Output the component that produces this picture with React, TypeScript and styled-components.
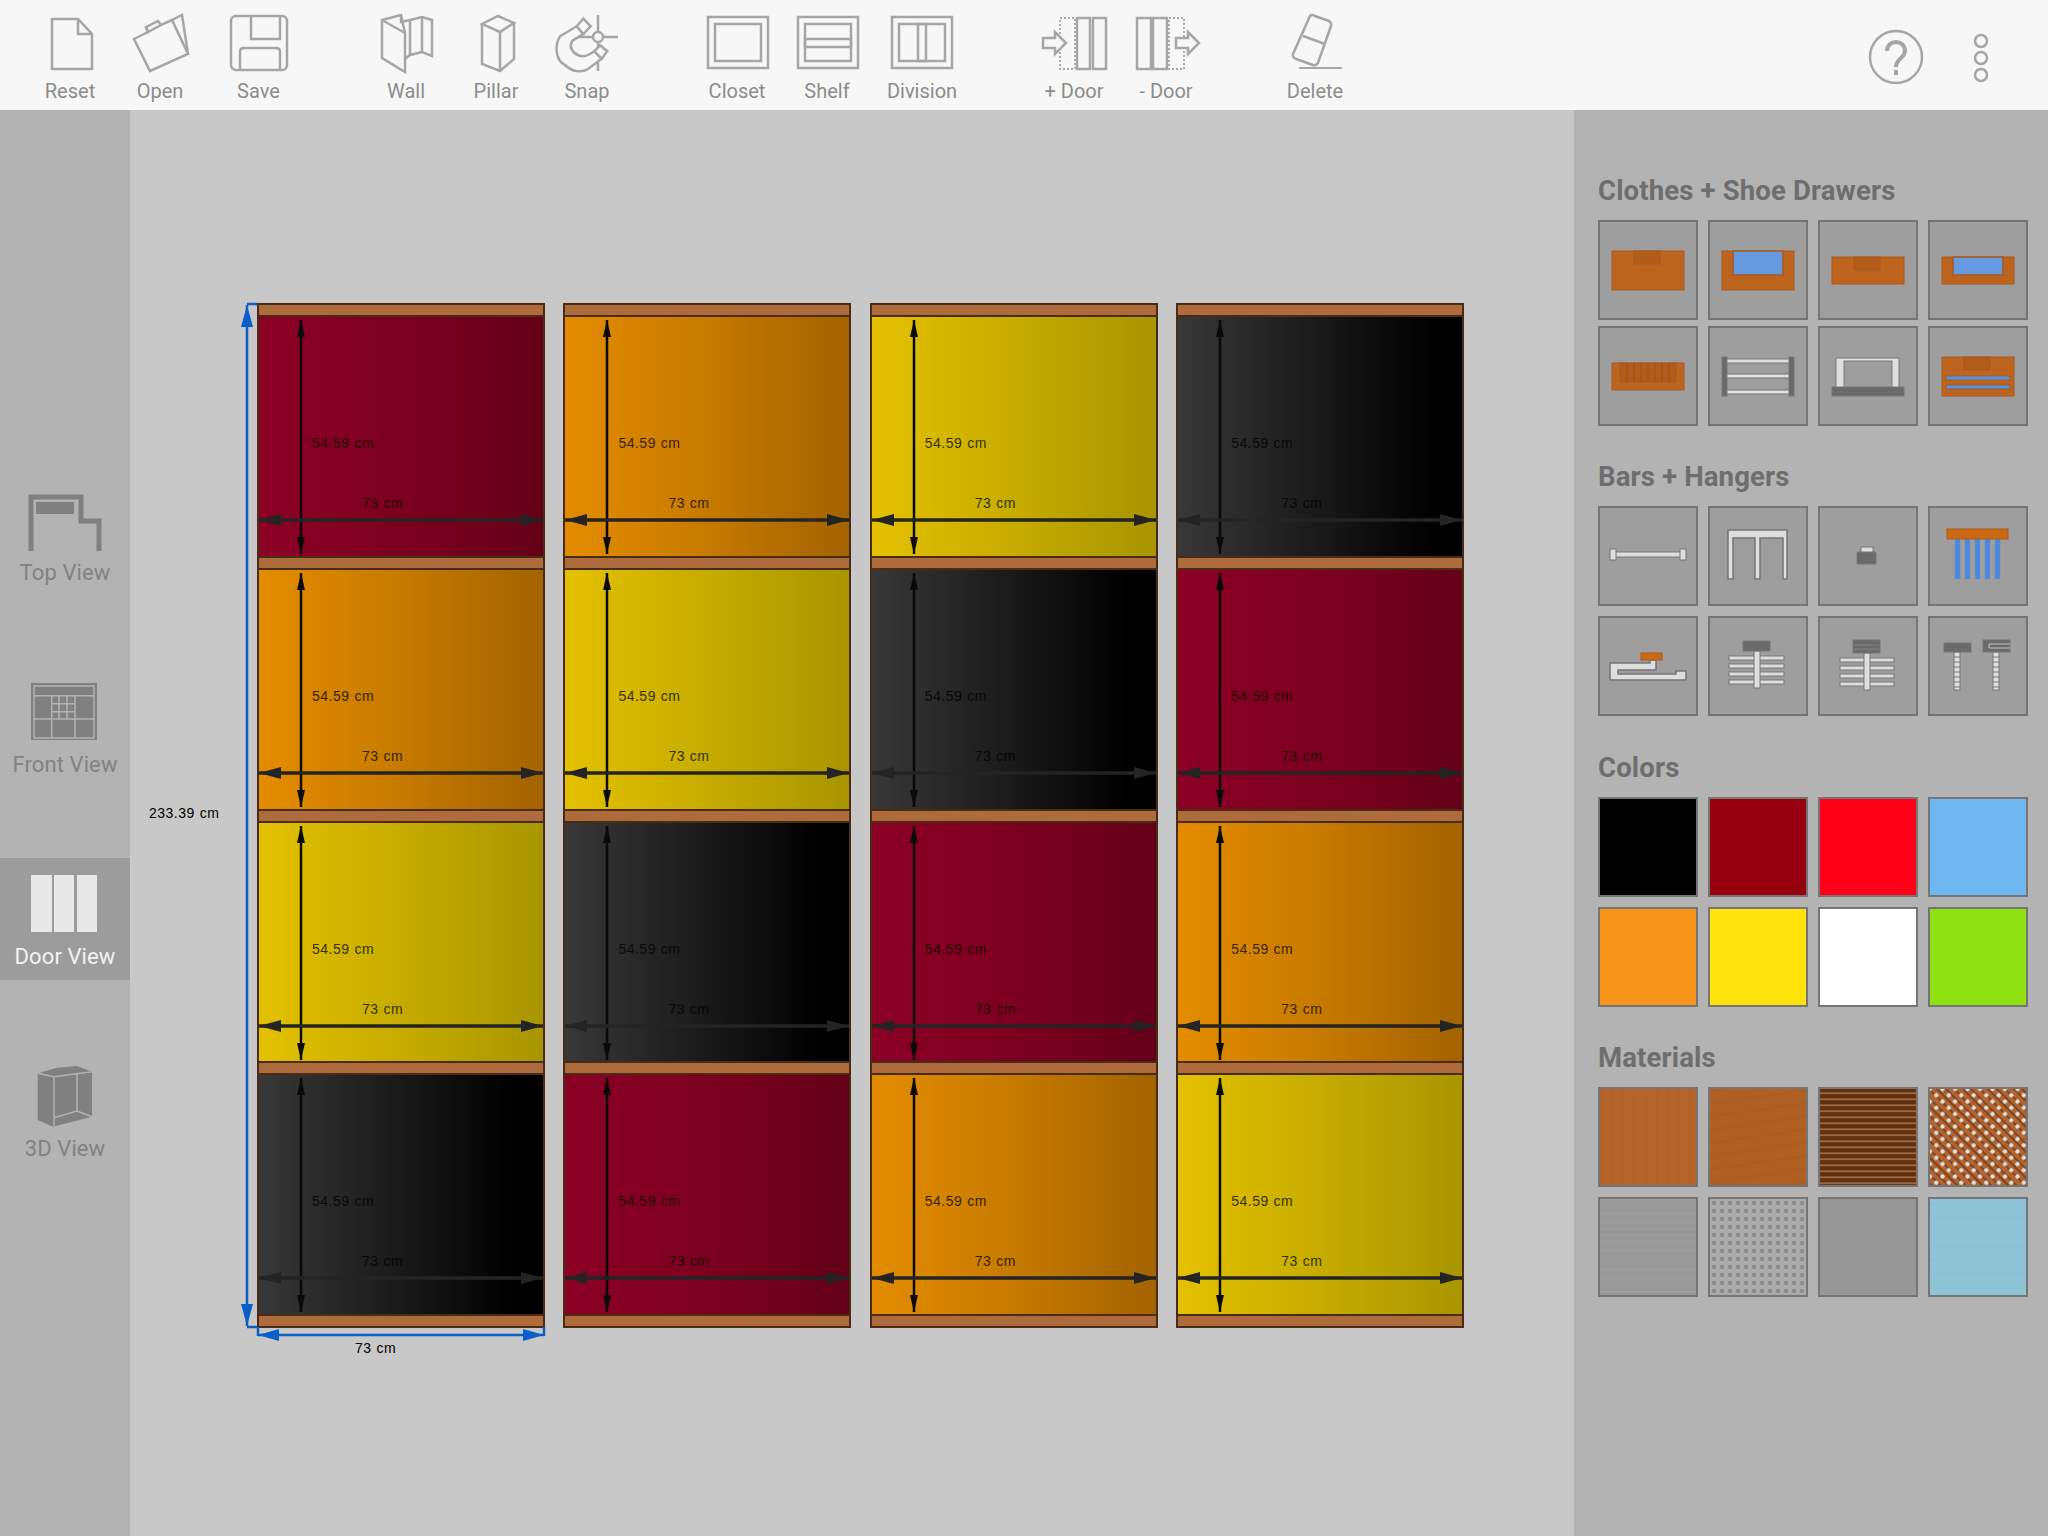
import React from "react";
import styled, { createGlobalStyle } from "styled-components";

const GlobalStyle = createGlobalStyle`
  html, body { margin: 0; padding: 0; }
  body { font-family: Roboto, "Liberation Sans", sans-serif; background: #c8c8c8; }
`;

const Page = styled.div`
  width: 2048px;
  height: 1536px;
  display: flex;
  flex-direction: column;
  overflow: hidden;
`;

const Toolbar = styled.header`
  height: 110px;
  flex: none;
  background: #f7f7f7;
  display: flex;
  padding-left: 25px;
  box-sizing: border-box;
`;

const ToolItem = styled.div<{ $w?: number; $ml?: number }>`
  width: ${({ $w }) => $w ?? 90}px;
  margin-left: ${({ $ml }) => $ml ?? 0}px;
  padding-top: 14px;
  display: flex;
  flex-direction: column;
  align-items: center;
  box-sizing: border-box;
`;

const ToolLabel = styled.span`
  font-size: 20px;
  line-height: 24px;
  margin-top: 5px;
  color: #8c8c8c;
  white-space: nowrap;
`;

const ToolSvg = styled.svg.attrs({ viewBox: "0 0 64 60", width: 64, height: 60 })`
  fill: none;
  stroke: #a6a6a6;
  stroke-width: 2.5;
  overflow: visible;
`;

const HelpButton = styled.svg.attrs({ viewBox: "0 0 56 56", width: 56, height: 56 })`
  margin: 29px 0 0 508px;
  fill: none;
  stroke: #a6a6a6;
  stroke-width: 2.5;
`;

const MoreButton = styled.svg.attrs({ viewBox: "0 0 18 52", width: 18, height: 52 })`
  margin: 32px 0 0 48px;
  fill: none;
  stroke: #a6a6a6;
  stroke-width: 2.5;
`;

const Body = styled.div`
  flex: 1;
  display: flex;
  min-height: 0;
`;

const ViewRail = styled.nav`
  width: 130px;
  flex: none;
  background: #b3b3b3;
  display: flex;
  flex-direction: column;
  justify-content: center;
  gap: 70px;
`;

const ViewItem = styled.div<{ $active?: boolean }>`
  height: 122px;
  padding-top: 17px;
  box-sizing: border-box;
  display: flex;
  flex-direction: column;
  align-items: center;
  background: ${({ $active }) => ($active ? "#9c9c9c" : "transparent")};
  color: ${({ $active }) => ($active ? "#f2f2f2" : "#828282")};
`;

const ViewLabel = styled.span`
  font-size: 22px;
  line-height: 26px;
  margin-top: 9px;
  letter-spacing: 0.1px;
  white-space: nowrap;
`;

const ViewSvg = styled.svg.attrs({ viewBox: "0 0 76 60", width: 76, height: 60 })`
  overflow: visible;
`;

const Canvas = styled.main`
  flex: 1;
  background: #c8c8c8;
  padding: 193px 0 0 127px;
  box-sizing: border-box;
`;

const Stage = styled.div`
  position: relative;
  display: flex;
  gap: 18.4px;
  width: fit-content;
`;

const DoorColumn = styled.div`
  width: 288px;
  box-sizing: border-box;
  border: solid #4a2c16;
  border-width: 0 2px;
  display: flex;
  flex-direction: column;
`;

const Shelf = styled.div`
  height: 14px;
  box-sizing: border-box;
  background: #ae6b3b;
  border-top: 2px solid #4a2c16;
  border-bottom: 2px solid #4a2c16;
`;

const gradients = {
  red: "linear-gradient(90deg, #8d0026, #7c0020 50%, #640018)",
  orange: "linear-gradient(90deg, #e48c00, #c97c00 45%, #a36300)",
  yellow: "linear-gradient(90deg, #e4c100, #c9ae00 45%, #a89500)",
  black: "linear-gradient(90deg, #383838, #000 90%)",
};

type DoorColor = keyof typeof gradients;

const Door = styled.div<{ $color: DoorColor }>`
  position: relative;
  height: 238.75px;
  background: ${({ $color }) => gradients[$color]};
`;

const ArrowLayer = styled.svg`
  position: absolute;
  left: 0;
  top: 0;
  width: 100%;
  height: 100%;
  overflow: visible;
`;

const Measure = styled.span<{ $x: number; $y: number; $faded?: boolean }>`
  position: absolute;
  left: ${({ $x }) => $x}px;
  top: ${({ $y }) => $y}px;
  transform: translateY(-50%);
  font-family: "Liberation Sans", Arial, sans-serif;
  font-size: 14px;
  letter-spacing: 0.5px;
  word-spacing: 0.5px;
  color: #000;
  opacity: ${({ $faded }) => ($faded ? 0.75 : 1)};
  white-space: nowrap;
`;

const SidePanel = styled.aside`
  width: 474px;
  flex: none;
  background: #b3b3b3;
  box-sizing: border-box;
  padding: 66px 0 0 24px;
  display: flex;
  flex-direction: column;
  gap: 36.3px;
`;

const Section = styled.section`
  display: flex;
  flex-direction: column;
  gap: 14px;
`;

const SectionTitle = styled.h2`
  margin: 0;
  font-size: 27.5px;
  line-height: 30px;
  font-weight: 700;
  letter-spacing: 0.15px;
  color: #6e6e6e;
`;

const TileGrid = styled.div<{ $rowGap?: number }>`
  display: grid;
  grid-template-columns: repeat(4, 100px);
  grid-auto-rows: 100px;
  column-gap: 10px;
  row-gap: ${({ $rowGap }) => $rowGap ?? 10}px;
`;

const Tile = styled.div`
  box-sizing: border-box;
  border: 2px solid #757575;
  background: #9e9e9e;
`;

const Swatch = styled.div<{ $fill: string }>`
  box-sizing: border-box;
  border: 2px solid #757575;
  background: ${({ $fill }) => $fill};
`;

const TileSvg = styled.svg.attrs({ viewBox: "2 2 96 96" })`
  display: block;
  width: 100%;
  height: 100%;
`;

const wood = "#bd641f";
const woodEdge = "#a8591f";
const woodDark = "#b35d1c";
const blue = "#6699dd";
const light = "#dedede";
const grey = "#6a6a6a";
const edge = "#767676";

const Drawer = ({ y, h, pocket, handle = 13 }: { y: number; h: number; pocket?: number; handle?: number }) => (
  <>
    <rect x="14" y={y} width="72" height={h} fill={wood} stroke={woodEdge} />
    {pocket ? (
      <rect x="25" y={y} width="50" height={pocket} fill={blue} stroke={woodEdge} strokeWidth="1.5" />
    ) : (
      <rect x="36" y={y} width="26" height={handle} fill={woodDark} stroke={woodEdge} />
    )}
  </>
);

const Rails = ({ x, w, ys, h = 4 }: { x: number; w: number; ys: number[]; h?: number }) => (
  <>
    {ys.map((y) => (
      <rect key={y} x={x} y={y} width={w} height={h} fill={light} stroke={edge} />
    ))}
  </>
);

const drawerIcons: React.ReactNode[] = [
  <Drawer y={31} h={39} />,
  <Drawer y={31} h={39} pocket={24} />,
  <Drawer y={37} h={27} />,
  <Drawer y={37} h={27} pocket={18} />,
  <>
    <rect x="14" y="37" width="72" height="27" fill={wood} stroke={woodEdge} />
    <rect x="22" y="37" width="56" height="19" fill={woodDark} stroke={woodEdge} />
    {[29, 36, 43, 50, 57, 64, 71].map((x) => (
      <line key={x} x1={x} x2={x} y1="37" y2="56" stroke="#99521c" />
    ))}
  </>,
  <>
    <Rails x={18} w={64} ys={[33, 48, 64]} />
    <rect x="14" y="31" width="5" height="39" fill={grey} stroke={edge} />
    <rect x="81" y="31" width="5" height="39" fill={grey} stroke={edge} />
  </>,
  <>
    <rect x="18" y="32" width="63" height="30" fill={light} stroke={edge} />
    <rect x="26" y="35" width="48" height="27" fill="#9e9e9e" stroke={edge} />
    <rect x="14" y="61" width="72" height="9" fill={grey} stroke={edge} />
  </>,
  <>
    <Drawer y={31} h={39} />
    <rect x="18" y="50" width="64" height="4" fill="#4f94e8" stroke={woodEdge} />
    <rect x="18" y="59" width="64" height="4" fill="#4f94e8" stroke={woodEdge} />
  </>,
];

const barIcons: React.ReactNode[] = [
  <>
    <rect x="17" y="46" width="66" height="5" fill={light} stroke={edge} />
    <rect x="12" y="43" width="6" height="11" fill={light} stroke={edge} />
    <rect x="82" y="43" width="6" height="11" fill={light} stroke={edge} />
  </>,
  <path d="M20 24H79V73H75V32H52V73H47V32H25V73H20Z" fill={light} stroke={edge} strokeWidth="1.5" />,
  <>
    <rect x="43" y="41" width="12" height="6" fill={light} stroke={edge} />
    <rect x="39" y="46" width="19" height="12" rx="1" fill={grey} stroke={edge} />
  </>,
  <>
    {[27, 37, 47, 57, 67].map((x) => (
      <rect key={x} x={x} y="33" width="5" height="40" fill="#4688e6" stroke="#7d8fa8" strokeWidth="0.6" />
    ))}
    <rect x="19" y="23" width="61" height="10" fill="#cc6a14" stroke={woodEdge} />
  </>,
  <>
    <path d="M12 47H52V44H58V54H20V58H78V55H88V64H12Z" fill={light} stroke={edge} strokeWidth="1.5" />
    <rect x="43" y="37" width="21" height="7" fill="#cc6a14" stroke={woodEdge} />
  </>,
  <>
    <Rails x={21} w={55} ys={[40, 48, 56, 64]} />
    <rect x="46" y="35" width="6" height="37" fill={light} stroke={edge} />
    <rect x="35" y="25" width="27" height="10" fill={grey} stroke={edge} />
  </>,
  <>
    <Rails x={22} w={54} ys={[42, 50, 58, 66]} />
    <rect x="46" y="37" width="6" height="37" fill={light} stroke={edge} />
    <rect x="35" y="24" width="27" height="13" fill={grey} stroke={edge} />
    <path d="M36 29H61M36 33H61" stroke="#858585" />
  </>,
  <>
    <rect x="26" y="36" width="6" height="38" fill={light} stroke={edge} />
    <rect x="65" y="36" width="6" height="38" fill={light} stroke={edge} />
    <path d="M26 41H32M26 46H32M26 51H32M26 56H32M26 61H32M26 66H32M26 71H32M65 41H71M65 46H71M65 51H71M65 56H71M65 61H71M65 66H71M65 71H71" stroke={edge} />
    <rect x="16" y="27" width="27" height="9" fill={grey} stroke={edge} />
    <rect x="55" y="24" width="27" height="12" fill={grey} stroke={edge} />
    <path d="M82 28H61V32H82" fill="none" stroke="#c4c4c4" />
  </>,
];

const colorSwatches = ["#000000", "#96000f", "#ff0019", "#6fb7ef", "#f7941a", "#ffe30a", "#ffffff", "#8fe011"];

const materials = [
  "repeating-linear-gradient(90deg, rgba(90,40,0,0.03) 0 3px, transparent 3px 11px), #b5642c",
  "repeating-linear-gradient(172deg, rgba(90,40,0,0.05) 0 3px, transparent 3px 13px), #b16024",
  "repeating-linear-gradient(180deg, #5f3214 0 3px, #8a5530 3px 4px, #a06a3c 4px 5px, #6a3a1a 5px 6px), #5f3214",
  "radial-gradient(circle, #e4e2dc 0 1.8px, transparent 2.4px) 0 0 / 12.5px 12.5px, radial-gradient(circle, #e4e2dc 0 1.8px, transparent 2.4px) 6.25px 6.25px / 12.5px 12.5px, repeating-linear-gradient(45deg, #7d4a2c 0 2px, #b5622c 2px 6px), #b5622c",
  "repeating-linear-gradient(180deg, rgba(255,255,255,0.015) 0 3px, rgba(0,0,0,0.015) 3px 7px), #9a9a9a",
  "radial-gradient(circle, #8c8c8c 0 2px, transparent 2.6px) 0 0 / 8px 8px, #acacac",
  "#979797",
  "repeating-linear-gradient(180deg, rgba(255,255,255,0.02) 0 3px, transparent 3px 7px), #8cc3d4",
];

const rotation: DoorColor[] = ["red", "orange", "yellow", "black"];

const DoorCell = ({ color }: { color: DoorColor }) => (
  <Door $color={color}>
    <ArrowLayer>
      <path d="M42 3V237" stroke="#0a0a0a" strokeWidth="2.5" />
      <path d="M42 3L38 20H46ZM42 237L38 220H46Z" fill="#0a0a0a" />
      <path d="M0 203H284" stroke="#242424" strokeWidth="3.5" />
      <path d="M0 203L22 197V209ZM284 203L262 197V209Z" fill="#242424" />
    </ArrowLayer>
    <Measure $x={53} $y={126} $faded>
      54.59 cm
    </Measure>
    <Measure $x={103} $y={186} $faded>
      73 cm
    </Measure>
  </Door>
);

const App = () => (
  <Page>
    <GlobalStyle />
    <Toolbar>
      <ToolItem>
        <ToolSvg>
          <path d="M14 5H40L54 20V55H14Z" />
          <path d="M40 5V20H54" />
        </ToolSvg>
        <ToolLabel>Reset</ToolLabel>
      </ToolItem>
      <ToolItem>
        <ToolSvg>
          <path d="M6 25L20 18L18 13L30 7L33 11L44 6L60 40L22 57Z" />
          <path d="M44 6L54 1L60 40" />
          <path d="M18 13L20 18L33 11" />
        </ToolSvg>
        <ToolLabel>Open</ToolLabel>
      </ToolItem>
      <ToolItem $w={107}>
        <ToolSvg>
          <rect x="4" y="2" width="56" height="54" rx="5" />
          <path d="M24 2V25H53V2" />
          <path d="M13 56V38Q13 34 17 34H49Q53 34 53 38V56" />
        </ToolSvg>
        <ToolLabel>Save</ToolLabel>
      </ToolItem>
      <ToolItem $ml={49}>
        <ToolSvg>
          <path d="M8 6L27 1L31 19V58L8 44Z" />
          <path d="M8 6L31 19" />
          <path d="M27 1V8L36 6L48 3L58 6V42L48 38L36 41L31 45" />
          <path d="M36 6V41M48 3V38" />
        </ToolSvg>
        <ToolLabel>Wall</ToolLabel>
      </ToolItem>
      <ToolItem>
        <ToolSvg>
          <path d="M18 10L34 2L50 9L36 18Z" />
          <path d="M18 10V50L36 57L50 45V9M36 18V57" />
        </ToolSvg>
        <ToolLabel>Pillar</ToolLabel>
      </ToolItem>
      <ToolItem $ml={1}>
        <ToolSvg>
          <path d="M43 1V57M22 23H63" />
          <circle cx="43" cy="23" r="5" fill="#f7f7f7" />
          <path
            d="M21.7 12.3L5 22.3C-1 32 1 47 10 51C17 58 27 59 33 55L46.7 44.7L39.3 37.3L33 41C27 44 20 41 17 36C14 31 17 26 20 25L28.3 20Z"
            fill="#f7f7f7"
          />
          <path d="M21.7 12.3L28.3 4.7L35.7 12.3L28.3 20Z" fill="#f7f7f7" />
          <path d="M39.3 37.3L45 31.3L52.3 37.3L46.7 44.7Z" fill="#f7f7f7" />
        </ToolSvg>
        <ToolLabel>Snap</ToolLabel>
      </ToolItem>
      <ToolItem $ml={60}>
        <ToolSvg>
          <rect x="3" y="3" width="60" height="51" />
          <rect x="10" y="10" width="46" height="37" />
        </ToolSvg>
        <ToolLabel>Closet</ToolLabel>
      </ToolItem>
      <ToolItem>
        <ToolSvg>
          <rect x="3" y="3" width="60" height="51" />
          <rect x="10" y="10" width="46" height="37" />
          <rect x="10" y="25" width="46" height="8" />
        </ToolSvg>
        <ToolLabel>Shelf</ToolLabel>
      </ToolItem>
      <ToolItem $w={100}>
        <ToolSvg>
          <rect x="2" y="3" width="60" height="51" />
          <rect x="9" y="10" width="46" height="37" />
          <rect x="28" y="10" width="8" height="37" />
        </ToolSvg>
        <ToolLabel>Division</ToolLabel>
      </ToolItem>
      <ToolItem $ml={57}>
        <ToolSvg>
          <rect x="18" y="4" width="15" height="51" strokeDasharray="2 2" strokeWidth="1.8" />
          <rect x="35" y="4" width="13" height="51" />
          <rect x="51" y="4" width="13" height="51" />
          <path d="M1 24H13V18L24 29L13 40V34H1Z" fill="#f7f7f7" />
        </ToolSvg>
        <ToolLabel>+ Door</ToolLabel>
      </ToolItem>
      <ToolItem $ml={2}>
        <ToolSvg>
          <rect x="3" y="4" width="14" height="51" />
          <rect x="19" y="4" width="14" height="51" />
          <rect x="35" y="4" width="15" height="51" strokeDasharray="2 2" strokeWidth="1.8" />
          <path d="M42 24H54V18L65 29L54 40V34H42Z" fill="#f7f7f7" />
        </ToolSvg>
        <ToolLabel>- Door</ToolLabel>
      </ToolItem>
      <ToolItem $ml={59}>
        <ToolSvg>
          <path d="M27 2Q29 0 32 2L46 7Q49 9 48 12L35 49Q33 52 30 51L13 45Q9 43 10 40Z" />
          <path d="M20 22L42 30" />
          <path d="M16 54H59" strokeWidth="1.8" />
        </ToolSvg>
        <ToolLabel>Delete</ToolLabel>
      </ToolItem>
      <HelpButton>
        <circle cx="28" cy="28" r="26" />
        <path d="M19 22C19 10 37 10 37 22C37 29 28 29 28 38" strokeWidth="4" />
        <path d="M28 41V46" strokeWidth="4" />
      </HelpButton>
      <MoreButton>
        <circle cx="9" cy="9" r="6" />
        <circle cx="9" cy="26" r="6" />
        <circle cx="9" cy="43" r="6" />
      </MoreButton>
    </Toolbar>
    <Body>
      <ViewRail>
        <ViewItem>
          <ViewSvg>
            <path d="M4 60V6H54V30H72V60" fill="none" stroke="#808080" strokeWidth="5" />
            <rect x="9" y="11" width="38" height="12" fill="#808080" />
          </ViewSvg>
          <ViewLabel>Top View</ViewLabel>
        </ViewItem>
        <ViewItem>
          <ViewSvg>
            <rect x="4" y="0" width="66" height="57" fill="#808080" />
            <rect x="7" y="3" width="60" height="52" fill="none" stroke="#b3b3b3" strokeWidth="1.5" />
            <path d="M7 12.7H67M7 36H67M24.7 12.7V55M48 12.7V55M32 12.7V36M40 12.7V36M24.7 20.7H48M24.7 28.7H48" stroke="#b3b3b3" strokeWidth="1.5" fill="none" />
          </ViewSvg>
          <ViewLabel>Front View</ViewLabel>
        </ViewItem>
        <ViewItem $active>
          <ViewSvg>
            <rect x="4" y="0" width="21" height="57" fill="#e8e8e8" />
            <rect x="27" y="0" width="20" height="57" fill="#e8e8e8" />
            <rect x="50" y="0" width="20" height="57" fill="#e8e8e8" />
          </ViewSvg>
          <ViewLabel>Door View</ViewLabel>
        </ViewItem>
        <ViewItem>
          <ViewSvg>
            <path d="M10.7 6.3L30 0.7L50 -1L65 4.7V49.7L26 59.7L10.7 53Z" fill="#808080" />
            <path d="M10.7 6.3L27 9.7L65 4.7M27 9.7V59.7M50 6V44M27 50.7L50 44L65 49.7" stroke="#b3b3b3" strokeWidth="1.5" fill="none" />
          </ViewSvg>
          <ViewLabel>3D View</ViewLabel>
        </ViewItem>
      </ViewRail>
      <Canvas>
        <Stage>
          {[0, 1, 2, 3].map((col) => (
            <DoorColumn key={col}>
              <Shelf />
              {[0, 1, 2, 3].map((row) => (
                <React.Fragment key={row}>
                  <DoorCell color={rotation[(col + row) % 4]} />
                  <Shelf />
                </React.Fragment>
              ))}
            </DoorColumn>
          ))}
          <ArrowLayer>
            <path d="M-10 2V1023M-10 1H0M-10 1024H0M1 1024V1033M287 1024V1033M1 1032H287" stroke="#0a5fc8" strokeWidth="2.5" fill="none" />
            <path d="M-10 2L-16 24H-4ZM-10 1023L-16 1001H-4ZM1 1032L22 1026V1038ZM287 1032L266 1026V1038Z" fill="#0a5fc8" />
          </ArrowLayer>
          <Measure $x={-108} $y={510}>
            233.39 cm
          </Measure>
          <Measure $x={98} $y={1045}>
            73 cm
          </Measure>
        </Stage>
      </Canvas>
      <SidePanel>
        <Section>
          <SectionTitle>Clothes + Shoe Drawers</SectionTitle>
          <TileGrid $rowGap={6}>
            {drawerIcons.map((icon, i) => (
              <Tile key={i}>
                <TileSvg>{icon}</TileSvg>
              </Tile>
            ))}
          </TileGrid>
        </Section>
        <Section>
          <SectionTitle>Bars + Hangers</SectionTitle>
          <TileGrid>
            {barIcons.map((icon, i) => (
              <Tile key={i}>
                <TileSvg>{icon}</TileSvg>
              </Tile>
            ))}
          </TileGrid>
        </Section>
        <Section>
          <SectionTitle>Colors</SectionTitle>
          <TileGrid>
            {colorSwatches.map((c) => (
              <Swatch key={c} $fill={c} />
            ))}
          </TileGrid>
        </Section>
        <Section>
          <SectionTitle>Materials</SectionTitle>
          <TileGrid>
            {materials.map((m) => (
              <Swatch key={m} $fill={m} />
            ))}
          </TileGrid>
        </Section>
      </SidePanel>
    </Body>
  </Page>
);

export default App;
